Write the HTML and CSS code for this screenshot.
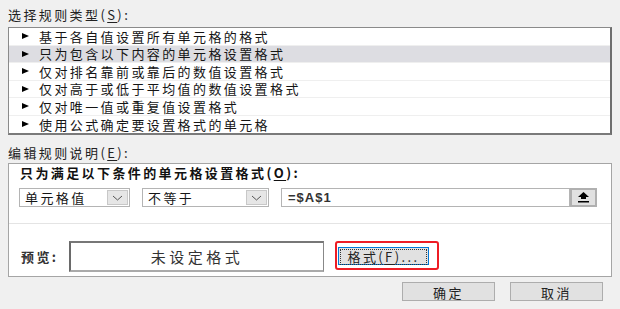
FILE: index.html
```html
<!DOCTYPE html>
<html lang="zh-CN">

<head>
    <meta charset="UTF-8">
    <title>新建格式规则</title>
    <link rel="stylesheet" href="styles.css">
</head>

<body>
    <div class="dialog">
        <div class="group-label">选择规则类型(<u>S</u>):</div>

        <!-- 规则类型列表 -->
        <div class="listbox">
            <div class="rule-item"><span class="bullet"></span>基于各自值设置所有单元格的格式</div>
            <div class="rule-item selected"><span class="bullet"></span>只为包含以下内容的单元格设置格式</div>
            <div class="rule-item"><span class="bullet"></span>仅对排名靠前或靠后的数值设置格式</div>
            <div class="rule-item"><span class="bullet"></span>仅对高于或低于平均值的数值设置格式</div>
            <div class="rule-item"><span class="bullet"></span>仅对唯一值或重复值设置格式</div>
            <div class="rule-item last"><span class="bullet"></span>使用公式确定要设置格式的单元格</div>
        </div>

        <div class="group-label second">编辑规则说明(<u>E</u>):</div>

        <div class="edit-box">
            <div class="condition-title">只为满足以下条件的单元格设置格式(<u>O</u>):</div>

            <div class="condition-row">
                <div class="combo combo-field">
                    <span class="combo-text">单元格值</span>
                    <span class="combo-arrow">
                        <svg width="11" height="6" viewBox="0 0 11 6"><polyline points="1,1 5.5,5 10,1" fill="none" stroke="#555" stroke-width="1"/></svg>
                    </span>
                </div>
                <div class="combo combo-op">
                    <span class="combo-text">不等于</span>
                    <span class="combo-arrow">
                        <svg width="11" height="6" viewBox="0 0 11 6"><polyline points="1,1 5.5,5 10,1" fill="none" stroke="#555" stroke-width="1"/></svg>
                    </span>
                </div>
                <div class="ref-input">=$A$1</div>
                <div class="ref-button">
                    <svg width="13" height="11" viewBox="0 0 13 11">
                        <polygon points="6.5,0 12,5 1,5" fill="#000"/>
                        <rect x="4" y="5" width="5" height="2" fill="#000"/>
                        <rect x="1" y="9" width="11" height="1.5" fill="#000"/>
                    </svg>
                </div>
            </div>

            <div class="separator"></div>

            <div class="preview-row">
                <div class="preview-label">预览:</div>
                <div class="preview-box">未设定格式</div>
                <div class="highlight">
                    <button class="btn btn-default"><span class="focus">格式(<u>F</u>)...</span></button>
                </div>
            </div>
        </div>

        <div class="footer">
            <button class="btn">确定</button>
            <button class="btn">取消</button>
        </div>
    </div>
</body>

</html>
```

FILE: styles.css
```css
body {
    margin: 0;
    background-color: #f0f0f0;
    font-family: "Noto Sans CJK SC", "Microsoft YaHei", sans-serif;
    font-size: 13px;
    letter-spacing: 2.4px;
    color: #151515;
}

u {
    text-decoration: underline;
    text-underline-offset: 2px;
}

.dialog {
    padding: 6px 8px 0 8px;
}

.group-label {
    height: 18px;
    line-height: 18px;
    margin-bottom: 3px;
    color: #222;
}

.group-label.second {
    margin-top: 9px;
    margin-bottom: 1px;
}

.listbox {
    background-color: #fff;
    border: 1px solid #8a8a8a;
    border-right: 2px solid #6e6e6e;
    border-bottom: 2px solid #7a7a7a;
    height: 105px;
}

.rule-item {
    display: flex;
    align-items: center;
    height: 17.5px;
    padding-left: 13px;
    border-bottom: 1px solid #efefef;
    box-sizing: border-box;
    white-space: nowrap;
}

.rule-item.last {
    border-bottom: none;
}

.rule-item.selected {
    background-color: #dddde2;
}

/* 列表项前的小三角 */
.bullet {
    width: 0;
    height: 0;
    border-left: 7px solid #000;
    border-top: 3.5px solid transparent;
    border-bottom: 3.5px solid transparent;
    margin-right: 10px;
}

.edit-box {
    background-color: #fff;
    border: 1px solid #a5a5a5;
    height: 112px;
    padding-left: 10px;
}

.condition-title {
    font-weight: bold;
    height: 18px;
    line-height: 18px;
    padding-left: 1px;
    color: #111;
}

.condition-row {
    display: flex;
    margin-top: 6px;
    height: 19px;
}

.combo {
    display: flex;
    align-items: center;
    justify-content: space-between;
    box-sizing: border-box;
    height: 19px;
    border: 1px solid #b4b4b4;
    background-color: #fff;
    padding: 1px;
    margin-right: 12px;
}

.combo-field {
    width: 111px;
}

.combo-op {
    width: 127px;
}

.combo-text {
    padding-left: 4px;
    line-height: 15px;
}

.combo-arrow {
    display: flex;
    align-items: center;
    justify-content: center;
    width: 21px;
    height: 15px;
    background-color: #e6e6e6;
    border: 1px solid #c8c8c8;
    box-sizing: border-box;
}

.ref-input {
    box-sizing: border-box;
    width: 289px;
    height: 19px;
    line-height: 17px;
    border: 1px solid #b4b4b4;
    padding-left: 6px;
    font-weight: bold;
    font-family: "Liberation Sans", "Noto Sans CJK SC", sans-serif;
    letter-spacing: 1px;
    color: #333;
}

.ref-button {
    box-sizing: border-box;
    width: 27px;
    height: 19px;
    display: flex;
    align-items: center;
    justify-content: center;
    background-color: #e1e1e1;
    border: 2px solid #b0b0b0;
}

.separator {
    margin-top: 16px;
    margin-left: -10px;
    border-top: 1px solid #e4e4e4;
}

.preview-row {
    display: flex;
    align-items: center;
    margin-top: 17px;
}

.preview-label {
    width: 48px;
    padding-left: 2px;
    font-weight: bold;
    color: #333;
}

.preview-box {
    box-sizing: border-box;
    width: 255px;
    height: 31px;
    line-height: 27px;
    text-align: center;
    font-size: 15px;
    letter-spacing: 3.5px;
    border: 1px solid #888;
    border-left: 2px solid #6a6a6a;
    border-bottom: 2px solid #aaa;
    border-top: 2px solid #777;
    color: #333;
}

.highlight {
    margin-left: 11px;
    padding: 4px 8px 0 1px;
    height: 21px;
    border: 2.5px solid #ee1c24;
    border-radius: 3px;
    align-self: flex-start;
}

.btn {
    box-sizing: border-box;
    width: 93px;
    height: 19px;
    padding: 0;
    font-family: inherit;
    font-size: 13px;
    letter-spacing: 2.4px;
    color: #222;
    background-color: #e1e1e1;
    border: 1px solid #adadad;
}

.btn-default {
    width: 91px;
    height: 18px;
    border: 1px solid #0078d7;
    padding: 1px;
}

.focus {
    display: block;
    height: 14px;
    line-height: 14px;
    border: 1px dotted #333;
}

.footer {
    display: flex;
    justify-content: flex-end;
    gap: 15px;
    margin-top: 5px;
    padding-right: 9px;
}
```
